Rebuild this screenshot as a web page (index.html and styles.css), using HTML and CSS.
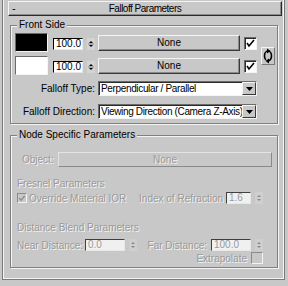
FILE: index.html
```html
<!DOCTYPE html>
<html>
<head>
<meta charset="utf-8">
<link rel="stylesheet" href="styles.css">
</head>
<body>
<div class="panel">
  <div class="title"><span class="minus">-</span><span class="title-text">Falloff Parameters</span></div>

  <fieldset class="group front">
    <legend>Front Side</legend>
    <div class="front-top">
      <div class="rows">
        <div class="row">
          <div class="swatch black"></div>
          <div class="field">100.0</div>
          <div class="arrows"><svg viewBox="0 0 8 12" width="8" height="12"><path d="M2 5 L4 3 L6 5 Z M2 7 L4 9 L6 7 Z" fill="#000"/><path d="M1 6 H7" stroke="#808080" stroke-width="1"/></svg></div>
          <div class="btn">None</div>
          <div class="check"><svg viewBox="0 0 11 11" width="11" height="11"><path d="M2 5 L4 8 L9 2" fill="none" stroke="#000" stroke-width="1.6"/></svg></div>
        </div>
        <div class="row">
          <div class="swatch white"></div>
          <div class="field">100.0</div>
          <div class="arrows"><svg viewBox="0 0 8 12" width="8" height="12"><path d="M2 5 L4 3 L6 5 Z M2 7 L4 9 L6 7 Z" fill="#000"/><path d="M1 6 H7" stroke="#808080" stroke-width="1"/></svg></div>
          <div class="btn">None</div>
          <div class="check"><svg viewBox="0 0 11 11" width="11" height="11"><path d="M2 5 L4 8 L9 2" fill="none" stroke="#000" stroke-width="1.6"/></svg></div>
        </div>
      </div>
      <div class="swap"><svg viewBox="0 0 12 16" width="12" height="16"><path d="M6 3 A3.5 5 0 0 1 6 13" fill="none" stroke="#000" stroke-width="1.6"/><path d="M6 13 A3.5 5 0 0 1 6 3" fill="none" stroke="#000" stroke-width="1.6" stroke-dasharray="0 2.5 20"/><path d="M5 0.5 L8.5 3 L5 5.5 Z M7 10.5 L3.5 13 L7 15.5 Z" fill="#000"/></svg></div>
    </div>
    <div class="select-row first">
      <span class="sel-label">Falloff Type:</span>
      <div class="select"><span class="sel-text">Perpendicular / Parallel</span><span class="sel-btn"><svg viewBox="0 0 7 4" width="7" height="4"><path d="M0 0 H7 L3.5 4 Z" fill="#000"/></svg></span></div>
    </div>
    <div class="select-row">
      <span class="sel-label">Falloff Direction:</span>
      <div class="select"><span class="sel-text">Viewing Direction (Camera Z-Axis)</span><span class="sel-btn"><svg viewBox="0 0 7 4" width="7" height="4"><path d="M0 0 H7 L3.5 4 Z" fill="#000"/></svg></span></div>
    </div>
  </fieldset>

  <fieldset class="group node">
    <legend>Node Specific Parameters</legend>
    <div class="obj-row">
      <span class="obj-label dis">Object:</span>
      <div class="btn dis-btn"><span class="dis">None</span></div>
    </div>
    <div class="sub dis">Fresnel Parameters</div>
    <div class="ior-row">
      <div class="check small disc"><svg viewBox="0 0 9 9" width="9" height="9"><path d="M1.5 4 L3.5 6.5 L7.5 1.5" fill="none" stroke="#8a8a8a" stroke-width="1.5"/></svg></div>
      <span class="dis ov">Override Material IOR</span>
      <div class="right">
        <span class="dis">Index of Refraction</span>
        <div class="field dfield w25"><span class="dis">1.6</span></div>
        <div class="arrows darr"><svg viewBox="0 0 8 12" width="8" height="12"><path d="M2 5 L4 3 L6 5 Z M2 7 L4 9 L6 7 Z" fill="#8a8a8a"/></svg></div>
      </div>
    </div>
    <div class="sub dis sub2">Distance Blend Parameters</div>
    <div class="near-row">
      <span class="dis near-label">Near Distance:</span>
      <div class="field dfield w40"><span class="dis">0.0</span></div>
      <div class="arrows darr"><svg viewBox="0 0 8 12" width="8" height="12"><path d="M2 5 L4 3 L6 5 Z M2 7 L4 9 L6 7 Z" fill="#8a8a8a"/></svg></div>
      <div class="right">
        <span class="dis">Far Distance:</span>
        <div class="field dfield w40"><span class="dis">100.0</span></div>
        <div class="arrows darr"><svg viewBox="0 0 8 12" width="8" height="12"><path d="M2 5 L4 3 L6 5 Z M2 7 L4 9 L6 7 Z" fill="#8a8a8a"/></svg></div>
      </div>
    </div>
    <div class="extra-row">
      <span class="dis">Extrapolate</span>
      <div class="check disc ex"></div>
    </div>
  </fieldset>
</div>
</body>
</html>
```

FILE: styles.css
```css
* { box-sizing: border-box; }
html, body { margin: 0; padding: 0; }
body {
  width: 288px;
  height: 286px;
  overflow: hidden;
  background: #c8c8c8;
  font: 10px "Liberation Sans", Arial, sans-serif;
  color: #000;
}
.panel {
  margin: 0 3px 0 2px;
  height: 280px;
  border: 1px solid #7a7a7a;
  border-top: none;
  box-shadow: inset 1px 0 #f4f4f4, inset -1px -1px #f4f4f4;
  padding: 1px 2px 0 5px;
}
.title {
  height: 15px;
  display: flex;
  align-items: center;
  border: 1px solid;
  border-color: #f4f4f4 #2a2a2a #2a2a2a #f4f4f4;
  box-shadow: inset -1px -1px #8a8a8a;
  padding: 0 14px 0 3px;
}
.minus { width: 11px; font-size: 11px; line-height: 11px; }
.title-text { flex: 1; text-align: center; letter-spacing: -0.5px; line-height: 12px; }

.group {
  margin: 3px 4px 0 2px;
  padding: 0 3px;
  border: 1px solid #808080;
  box-shadow: inset 1px 1px #f4f4f4, 1px 1px #f4f4f4;
  min-width: 0;
}
legend {
  margin-left: 3px;
  padding: 0 2px;
  line-height: 12px;
  background: #c8c8c8;
}
.front { padding: 2px 1px 4px 3px; }
.front-top { display: flex; align-items: center; }
.rows { display: flex; flex-direction: column; gap: 4px; }
.row { display: flex; align-items: center; height: 19px; }
.swatch { width: 33px; height: 19px; margin-left: 1px; border: 1px solid; border-color: #6a6a6a #f4f4f4 #f4f4f4 #6a6a6a; }
.swatch.black { background: #000; }
.swatch.white { background: #fff; }
.field {
  width: 30px;
  height: 12px;
  margin-left: 5px;
  margin-top: 3px;
  background: #fff;
  border-top: 1px solid #000;
  border-left: 1px solid #000;
  border-right: 1px solid #e8e8e8;
  border-bottom: 1px solid #e8e8e8;
  padding-left: 2px;
  line-height: 10px;
  white-space: nowrap;
  overflow: hidden;
}
.arrows {
  width: 8px;
  height: 12px;
  margin-left: 4px;
  margin-top: 3px;
  display: flex;
  background: #d4d4d4;
  border: 0;
}
.arrows svg { display: block; }
.btn {
  width: 142px;
  height: 16px;
  margin-left: 3px;
  border: 1px solid;
  border-color: #f4f4f4 #3a3a3a #3a3a3a #f4f4f4;
  box-shadow: inset -1px -1px #8a8a8a;
  display: flex;
  align-items: center;
  justify-content: center;
  line-height: 12px;
}
.check {
  width: 13px;
  height: 13px;
  margin-left: 4px;
  margin-top: 1px;
  background: #fff;
  border: 1px solid;
  border-color: #6a6a6a #f4f4f4 #f4f4f4 #6a6a6a;
  box-shadow: inset 1px 1px #2a2a2a;
  display: flex;
  align-items: center;
  justify-content: center;
}
.swap {
  width: 14px;
  height: 18px;
  margin-left: 4px;
  margin-top: 3px;
  border: 1px solid;
  border-color: #f4f4f4 #7a7a7a #7a7a7a #f4f4f4;
  display: flex;
  align-items: center;
  justify-content: center;
}

.select-row { display: flex; align-items: center; height: 15px; margin-top: 8px; }
.select-row.first { margin-top: 6px; }
.sel-label { width: 84px; text-align: right; padding-right: 3px; white-space: nowrap; }
.select {
  width: 159px;
  height: 15px;
  display: flex;
  align-items: center;
  background: #fff;
  border: 1px solid;
  border-color: #6a6a6a #f4f4f4 #f4f4f4 #6a6a6a;
  box-shadow: inset 1px 1px #2a2a2a;
}
.sel-text { flex: 1; min-width: 0; padding-left: 2px; white-space: nowrap; overflow: hidden; line-height: 12px; letter-spacing: -0.35px; }
.sel-btn {
  flex: none;
  width: 14px;
  height: 13px;
  background: #c8c8c8;
  border: 1px solid;
  border-color: #f4f4f4 #3a3a3a #3a3a3a #f4f4f4;
  display: flex;
  align-items: center;
  justify-content: center;
}

.node { margin-top: 5px; padding: 0 3px 3px 3px; }
.dis { color: #9a9a9a; text-shadow: 1px 1px 0 #f4f4f4; white-space: nowrap; }
.obj-row { display: flex; align-items: center; margin-top: 11px; height: 15px; }
.obj-label { width: 44px; padding-left: 8px; }
.dis-btn { width: 214px; height: 15px; margin-left: 0; border-color: #e4e4e4 #8a8a8a #8a8a8a #e4e4e4; box-shadow: none; }
.sub { margin-top: 11px; margin-left: 3px; line-height: 12px; }
.ior-row { display: flex; align-items: center; margin-top: 2px; height: 12px; }
.check.small { width: 10px; height: 10px; margin: 0 0 0 3px; }
.disc { background: #c8c8c8; border-color: #8a8a8a #f4f4f4 #f4f4f4 #8a8a8a; box-shadow: none; }
.ov { margin-left: 2px; }
.right { margin-left: auto; margin-right: 11px; display: flex; align-items: center; }
.dfield { background: #f0f0f0; margin-top: 0; margin-left: 3px; border-top-color: #404040; border-left-color: #404040; }
.w25 { width: 25px; }
.w40 { width: 40px; }
.darr { margin-top: 0; background: #cfcfcf; }
.sub2 { margin-top: 18px; }
.near-row { display: flex; align-items: center; margin-top: 4px; height: 14px; }
.near-label { margin-left: 3px; width: 64px; }
.near-row .dfield.w40 { margin-left: 4px; }
.near-row .right .dfield { margin-left: 4px; }
.extra-row { display: flex; align-items: center; justify-content: flex-end; height: 12px; margin-right: 11px; }
.check.ex { width: 12px; height: 12px; margin: 0 0 0 4px; }
```
